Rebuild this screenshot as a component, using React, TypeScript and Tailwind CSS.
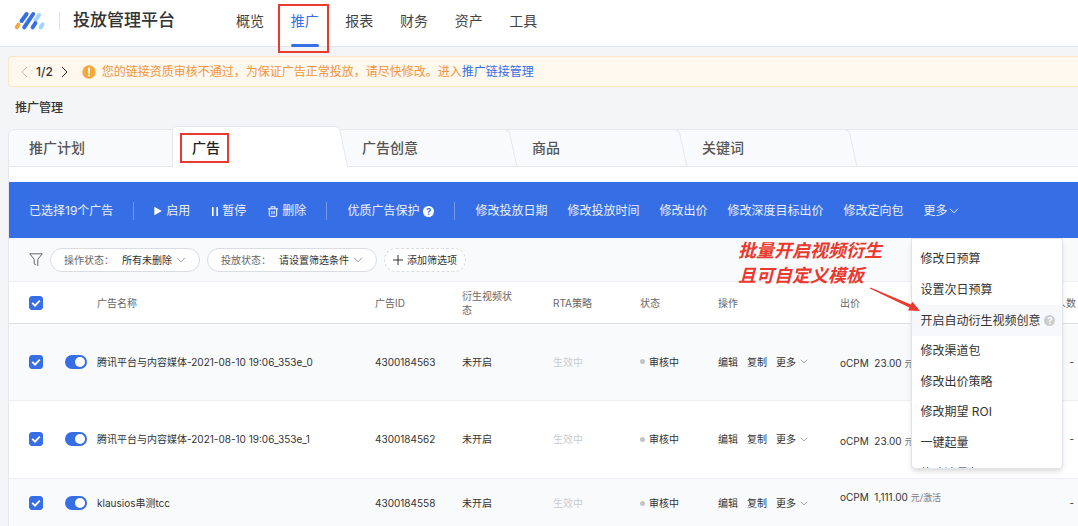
import type { ReactNode } from "react";
import clsx from "clsx";

// full-width punctuation
const COMMA = "\uff0c";
const COLON = "\uff1a";

const navItems = ["概览", "推广", "报表", "财务", "资产", "工具"];
const tabs = ["推广计划", "广告", "广告创意", "商品", "关键词"];
const batchActions = [
  "修改投放日期",
  "修改投放时间",
  "修改出价",
  "修改深度目标出价",
  "修改定向包",
];
const moreActions = [
  "修改日预算",
  "设置次日预算",
  "开启自动衍生视频创意",
  "修改渠道包",
  "修改出价策略",
  "修改期望 ROI",
  "一键起量",
  "修改流量包",
];

const ads = [
  {
    name: "腾讯平台与内容媒体-2021-08-10 19:06_353e_0",
    id: "4300184563",
    price: "23.00",
    row: "h-[77px] bg-[#f9fafc]",
    priceCell: "pt-1",
  },
  {
    name: "腾讯平台与内容媒体-2021-08-10 19:06_353e_1",
    id: "4300184562",
    price: "23.00",
    row: "h-[78px] bg-white",
    priceCell: "pt-1",
  },
  {
    name: "klausios串测tcc",
    id: "4300184558",
    price: "1,111.00",
    row: "h-[50px] bg-[#f9fafc]",
    priceCell: "pb-3",
  },
];

function Chevron({ className }: { className?: string }) {
  return (
    <svg viewBox="0 0 10 6" fill="none" stroke="currentColor" className={className}>
      <path d="M1 0.8 5 4.8 9 0.8" />
    </svg>
  );
}

function Logo() {
  return (
    <svg viewBox="0 0 32 20" className="h-5 w-8" fill="none" strokeWidth="4" strokeLinecap="round">
      <path d="M2.8 16.3 4.5 13.6" stroke="#f5a83c" />
      <path d="M21.4 9.4 25 4" stroke="#9fd4fb" />
      <path d="M7.6 10 12.6 3" stroke="#366ee6" />
      <path d="M10.2 16.3 19.2 3" stroke="#366ee6" />
      <path d="M18.6 16.3 21.4 12.2" stroke="#366ee6" />
      <path d="M26.6 16.3 28.6 13.4" stroke="#9fd4fb" />
    </svg>
  );
}

function Help({ className }: { className?: string }) {
  return (
    <span
      className={clsx(
        "flex size-[11px] items-center justify-center rounded-full text-[9px] leading-none font-bold",
        className,
      )}
    >
      ?
    </span>
  );
}

function Divider() {
  return <span className="h-[18px] w-px bg-white/30" />;
}

function Checkbox({ label }: { label: string }) {
  return (
    <label className="relative block size-3.5">
      <input
        type="checkbox"
        defaultChecked
        aria-label={label}
        className="peer block size-3.5 appearance-none rounded-[3px] border border-[#c5cad5] bg-white checked:border-[#366ee6] checked:bg-[#366ee6]"
      />
      <svg
        viewBox="0 0 14 14"
        className="pointer-events-none absolute inset-0 hidden size-3.5 peer-checked:block"
        fill="none"
        stroke="#fff"
        strokeWidth="1.8"
      >
        <path d="M3.2 6.8 6 9.6 10.8 4.6" />
      </svg>
    </label>
  );
}

function Toggle({ label }: { label: string }) {
  return (
    <label className="relative block h-3.5 w-[22px]">
      <input
        type="checkbox"
        role="switch"
        defaultChecked
        aria-label={label}
        className="peer block h-3.5 w-[22px] appearance-none rounded-full bg-[#c5cad5] checked:bg-[#366ee6]"
      />
      <span className="pointer-events-none absolute top-0.5 left-0.5 size-2.5 rounded-full bg-white peer-checked:left-2.5" />
    </label>
  );
}

function FilterPill({ label, value }: { label: string; value: string }) {
  return (
    <button className="flex h-6 items-center rounded-full border border-[#d9dce3] bg-white px-[13px] text-[#333]">
      <span className="mr-2 text-[#666]">
        {label}
        {COLON}
      </span>
      {value}
      <Chevron className="ml-1 h-1.5 w-2.5 text-[#999]" />
    </button>
  );
}

function BarButton({ icon, children }: { icon?: ReactNode; children: ReactNode }) {
  return (
    <button className="flex items-center gap-1 whitespace-nowrap">
      {icon}
      {children}
    </button>
  );
}

function Header() {
  return (
    <header className="flex h-[47px] items-center border-b border-[#e3e5ec] bg-white pb-1 pl-3.5">
      <Logo />
      <span className="mx-[13px] h-[18px] w-px bg-[#dfe1e6]" />
      <h1 className="w-[163px] text-[17px] font-medium text-[#333]">投放管理平台</h1>
      <nav className="grid w-[328px] grid-cols-6 text-sm text-[#444]">
        {navItems.map((item) => (
          <a
            key={item}
            href="#"
            className={clsx("relative justify-self-start", item === "推广" && "text-[#366ee6]")}
          >
            {item}
            {item === "推广" && (
              <>
                <span className="absolute inset-x-0 top-[33px] h-[3px] rounded-full bg-[#366ee6]" />
                <span className="absolute -top-[7px] -right-2.5 -left-[13px] h-[49px] border-2 border-[#ea3a30]" />
              </>
            )}
          </a>
        ))}
      </nav>
    </header>
  );
}

function Notice() {
  return (
    <div className="mt-[9px] flex h-[31px] items-center rounded-l border border-r-0 border-[#fbe6bf] bg-[#fff8ee] pl-3 text-xs">
      <button aria-label="上一条" className="text-[#bbb]">
        <svg viewBox="0 0 7 12" className="h-3 w-[7px]" fill="none" stroke="currentColor">
          <path d="M6 1 1 6 6 11" />
        </svg>
      </button>
      <span className="mx-2 font-medium text-[#333]">1/2</span>
      <button aria-label="下一条" className="text-[#333]">
        <svg viewBox="0 0 7 12" className="h-3 w-[7px]" fill="none" stroke="currentColor">
          <path d="M1 1 6 6 1 11" />
        </svg>
      </button>
      <svg viewBox="0 0 14 14" className="mr-1.5 ml-3.5 size-3.5">
        <circle cx="7" cy="7" r="6.7" fill="#f5a83c" />
        <path d="M7 3.2V8" stroke="#fff" strokeWidth="1.7" strokeLinecap="round" />
        <circle cx="7" cy="10.4" r="1" fill="#fff" />
      </svg>
      <p className="whitespace-nowrap text-[#f0953f]">
        {["您的链接资质审核不通过", "为保证广告正常投放", "请尽快修改。进入"].join(COMMA)}
        <a href="#" className="text-[#366ee6]">
          推广链接管理
        </a>
      </p>
    </div>
  );
}

function TabBar() {
  return (
    <div role="tablist" className="flex h-[38px] rounded-tl-md border-t border-b border-[#e5e7ec] bg-[#f9fafc]">
      {tabs.map((tab, i) => {
        const active = tab === "广告";
        return (
          <button
            key={tab}
            role="tab"
            aria-selected={active}
            className={clsx(
              "relative flex shrink-0 items-center pl-5 text-sm font-medium",
              i === 0 ? "w-[163px]" : "w-[170px]",
              active ? "text-[#222]" : "text-[#555]",
            )}
          >
            {active && (
              <svg viewBox="0 0 178 41" className="absolute bottom-[-1px] left-0 h-[41px] w-[178px]" fill="#fff">
                <path
                  d="M0.5 41V5Q0.5 0.5 5 0.5H163Q167 0.5 168 4.5L175.5 41"
                  stroke="#e5e7ec"
                />
              </svg>
            )}
            {i > 1 && (
              <svg viewBox="0 0 12 37" className="absolute top-0 -right-1.5 h-[37px] w-3" fill="none">
                <path d="M0 0Q3 0 3.8 4L11 37" stroke="#e5e7ec" />
              </svg>
            )}
            <span className="relative">
              {tab}
              {active && (
                <span className="absolute -inset-y-[5px] -right-[9px] -left-3 border-2 border-[#ea3a30]" />
              )}
            </span>
          </button>
        );
      })}
    </div>
  );
}

function BatchBar() {
  return (
    <div className="mt-[15px] flex h-14 items-center gap-5 bg-[#366ee6] pt-0.5 pl-5 text-xs whitespace-nowrap text-white/90">
      <span>已选择19个广告</span>
      <Divider />
      <div className="flex items-center gap-[22px]">
        <BarButton
          icon={
            <svg viewBox="0 0 8 10" className="h-2.5 w-2" fill="#fff">
              <path d="M0.3 0.8 7.8 5 0.3 9.2Z" />
            </svg>
          }
        >
          启用
        </BarButton>
        <BarButton
          icon={
            <svg viewBox="0 0 6 9" className="h-[9px] w-1.5" fill="#fff">
              <path d="M0 0H1.6V9H0ZM4.4 0H6V9H4.4Z" />
            </svg>
          }
        >
          暂停
        </BarButton>
        <BarButton
          icon={
            <svg viewBox="0 0 10 11" className="h-[11px] w-2.5" fill="none" stroke="#fff">
              <path d="M0 2.8H10M3 2.5V0.8H7V2.5M1.3 3V9.2Q1.3 10.3 2.4 10.3H7.6Q8.7 10.3 8.7 9.2V3M3.9 5V8.2M6.1 5V8.2" />
            </svg>
          }
        >
          删除
        </BarButton>
      </div>
      <Divider />
      <button className="flex items-center gap-1">
        优质广告保护
        <Help className="bg-white text-[#366ee6]" />
      </button>
      <Divider />
      {batchActions.map((action) => (
        <BarButton key={action}>{action}</BarButton>
      ))}
      <div className="relative flex h-full items-center">
        <button className="flex items-center gap-0.5">
          更多
          <Chevron className="h-1.5 w-2.5" />
        </button>
        <MoreMenu />
      </div>
    </div>
  );
}

function MoreMenu() {
  return (
    <div className="absolute top-full -left-3 z-10 h-[231px] w-[152px] overflow-hidden rounded-b border border-[#e1e4ea] bg-white pt-[5px] text-[#333] shadow-md">
      <ul className="grid h-[245px] grid-rows-8">
        {moreActions.map((action) => {
          const current = action === "开启自动衍生视频创意";
          return (
            <li key={action} className={clsx("flex", current && "bg-[#f7f8fc]")}>
              <button className="flex w-full items-center gap-1 pl-2">
                {action}
                {current && <Help className="bg-[#ccc] text-white" />}
              </button>
            </li>
          );
        })}
      </ul>
    </div>
  );
}

function Filters() {
  return (
    <div className="flex h-11 items-center gap-[7px] border-b border-[#eceef2] bg-[#f9fafc] pl-5">
      <svg viewBox="0 0 14 14" className="size-3.5" fill="none" stroke="#666">
        <path d="M8.8 13V6.4L13.2 0.8H0.8L5.2 6.4V10.8L7 12" />
      </svg>
      <FilterPill label="操作状态" value="所有未删除" />
      <FilterPill label="投放状态" value="请设置筛选条件" />
      <button className="flex h-6 items-center gap-1 rounded-full border border-dashed border-[#d9dce3] bg-white px-2 text-[#333]">
        <svg viewBox="0 0 10 10" className="size-2.5" fill="none" stroke="currentColor">
          <path d="M5 0V10M0 5H10" />
        </svg>
        添加筛选项
      </button>
    </div>
  );
}

function AdTable() {
  return (
    <table className="w-full table-fixed text-left text-[#333]">
      <colgroup>
        <col className="w-14" />
        <col className="w-8" />
        <col className="w-[278px]" />
        <col className="w-[87px]" />
        <col className="w-[91px]" />
        <col className="w-[87px]" />
        <col className="w-[78px]" />
        <col className="w-[122px]" />
        <col className="w-[140px]" />
        <col />
      </colgroup>
      <thead>
        <tr className="h-[41px] border-b border-[#dcdfe4] bg-white text-[#666] [&>th]:pt-0.5 [&>th]:font-normal">
          <th className="pl-5">
            <Checkbox label="全选" />
          </th>
          <th />
          <th>广告名称</th>
          <th>广告ID</th>
          <th className="pr-9">衍生视频状态</th>
          <th>RTA策略</th>
          <th>状态</th>
          <th>操作</th>
          <th>出价</th>
          <th className="pr-0.5 text-right">人数</th>
        </tr>
      </thead>
      <tbody>
        {ads.map((ad) => (
          <tr key={ad.id} className={clsx("border-b border-[#eceef2]", ad.row)}>
            <td className="pl-5">
              <Checkbox label={`选择 ${ad.name}`} />
            </td>
            <td>
              <Toggle label={`启用 ${ad.name}`} />
            </td>
            <td>{ad.name}</td>
            <td>{ad.id}</td>
            <td>未开启</td>
            <td className="text-[#ccc]">生效中</td>
            <td>
              <span className="flex items-center gap-1">
                <span className="size-[5px] rounded-full bg-[#c4c4c4]" />
                审核中
              </span>
            </td>
            <td>
              <span className="flex items-center gap-[9px]">
                <button>编辑</button>
                <button>复制</button>
                <button className="flex items-center gap-1">
                  更多
                  <Chevron className="h-[5px] w-2 text-[#888]" />
                </button>
              </span>
            </td>
            <td className={clsx("whitespace-nowrap", ad.priceCell)}>
              oCPM&nbsp; {ad.price} <span className="text-[9px] text-[#777]">元/激活</span>
            </td>
            <td className="pr-1 text-right">-</td>
          </tr>
        ))}
      </tbody>
    </table>
  );
}

function Callout() {
  return (
    <div className="pointer-events-none absolute top-0 left-[729px] z-20 text-lg leading-[25px] font-bold text-[#ea3a30] italic">
      批量开启视频衍生
      <br />
      且可自定义模板
      <svg viewBox="0 0 52 26" className="absolute top-[49px] left-[131px] h-[26px] w-[52px]" fill="#ea3a30">
        <path d="M0.8 1.4 1.4 0.6 41.8 17.6 43.4 14.8 51 24 39 23.6 40.4 20.6Z" />
      </svg>
    </div>
  );
}

export default function App() {
  return (
    <div className="h-screen overflow-hidden bg-[#f4f5f7] font-[Inter,'Noto_Sans_CJK_SC',sans-serif]">
      <Header />
      <main className="pl-2">
        <Notice />
        <h2 className="py-3 pl-[7px] text-xs leading-[18px] font-medium text-[#333]">推广管理</h2>
        <section className="rounded-tl-md border-l border-[#e5e7ec] bg-white">
          <TabBar />
          <BatchBar />
          <div className="relative text-[10px] leading-[14px]">
            <Callout />
            <Filters />
            <AdTable />
          </div>
        </section>
      </main>
    </div>
  );
}
